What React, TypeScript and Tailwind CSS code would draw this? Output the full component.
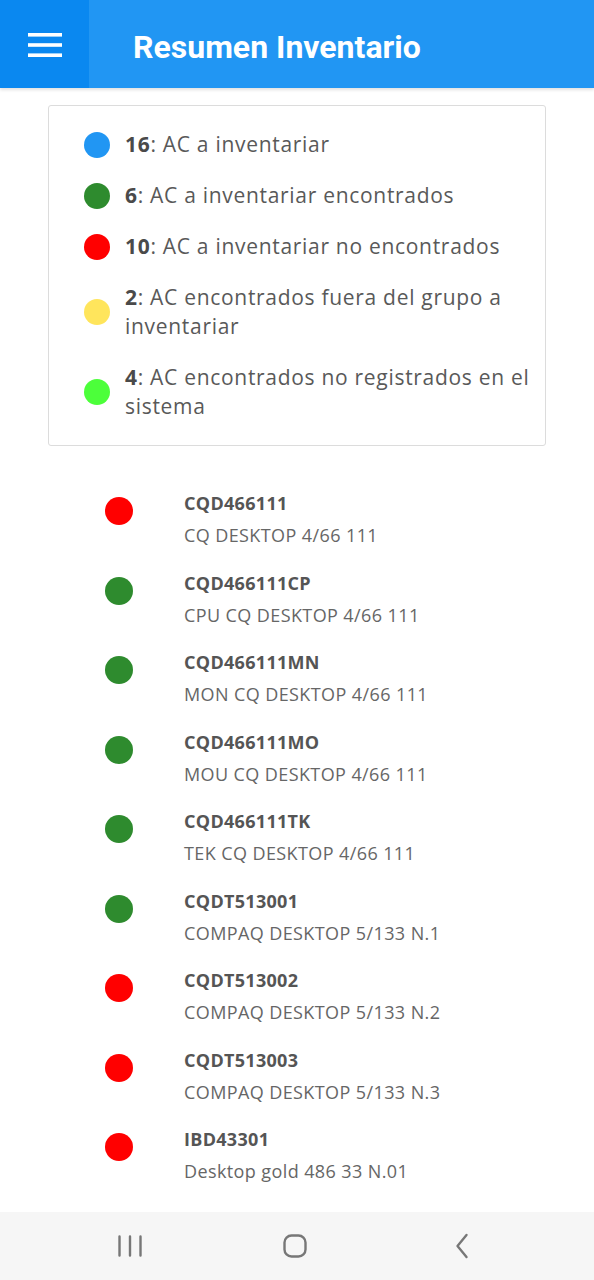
const legend = [
  { color: "bg-[#2196f3]", n: "16", text: "AC a inventariar" },
  { color: "bg-[#2e8b2e]", n: "6", text: "AC a inventariar encontrados" },
  { color: "bg-[#ff0000]", n: "10", text: "AC a inventariar no encontrados" },
  { color: "bg-[#ffe55c]", n: "2", text: "AC encontrados fuera del grupo a inventariar" },
  { color: "bg-[#4cff3a]", n: "4", text: "AC encontrados no registrados en el sistema" },
];

const items = [
  { color: "bg-[#ff0000]", code: "CQD466111", desc: "CQ DESKTOP 4/66 111" },
  { color: "bg-[#2e8b2e]", code: "CQD466111CP", desc: "CPU CQ DESKTOP 4/66 111" },
  { color: "bg-[#2e8b2e]", code: "CQD466111MN", desc: "MON CQ DESKTOP 4/66 111" },
  { color: "bg-[#2e8b2e]", code: "CQD466111MO", desc: "MOU CQ DESKTOP 4/66 111" },
  { color: "bg-[#2e8b2e]", code: "CQD466111TK", desc: "TEK CQ DESKTOP 4/66 111" },
  { color: "bg-[#2e8b2e]", code: "CQDT513001", desc: "COMPAQ DESKTOP 5/133 N.1" },
  { color: "bg-[#ff0000]", code: "CQDT513002", desc: "COMPAQ DESKTOP 5/133 N.2" },
  { color: "bg-[#ff0000]", code: "CQDT513003", desc: "COMPAQ DESKTOP 5/133 N.3" },
  { color: "bg-[#ff0000]", code: "IBD43301", desc: "Desktop gold 486 33 N.01" },
  { color: "bg-[#ff0000]", code: "IBD43302", desc: "Desktop gold 486 33 N.02" },
];

export default function App() {
  return (
    <div className="flex h-[1280px] w-[594px] flex-col overflow-hidden bg-white font-['Open_Sans',sans-serif]">
      {/* Header */}
      <div className="relative z-10 flex h-[88px] shrink-0 bg-[#2196f3] shadow-[0_2px_3px_rgba(0,0,0,0.12)]">
        <div className="flex w-[89px] items-center justify-center bg-[#0a88f0] pt-[2px] text-white">
          <svg width="34" height="24" viewBox="0 0 34 24" fill="currentColor">
            <rect x="0" y="0" width="34" height="3.6" />
            <rect x="0" y="10.2" width="34" height="3.6" />
            <rect x="0" y="20.4" width="34" height="3.6" />
          </svg>
        </div>
        <h1 className="ml-[44px] flex items-center pt-[6px] font-['Roboto',sans-serif] text-[32px] font-bold text-white">
          Resumen Inventario
        </h1>
      </div>

      {/* Content */}
      <div className="flex-1 overflow-hidden">
        <div className="mx-[48px] mt-[17px] rounded-[3px] border border-[#dcdcdc] py-[13px] pl-[35px] pr-[10px]">
          {legend.map((l) => (
            <div key={l.n} className="flex items-center gap-[15px] py-[11px]">
              <span className={`h-[26px] w-[26px] shrink-0 rounded-full ${l.color}`} />
              <p className="text-[21px] leading-[29px] tracking-[0.7px] text-[#595959]">
                <span className="font-bold text-[#4a4a4a]">{l.n}</span>: {l.text}
              </p>
            </div>
          ))}
        </div>

        <div className="mt-[45px]">
          {items.map((it) => (
            <div key={it.code} className="flex h-[79.5px] items-start">
              <span className={`ml-[105px] mt-[6px] h-[28px] w-[28px] shrink-0 rounded-full ${it.color}`} />
              <div className="ml-[51px]">
                <div className="text-[18px] font-bold leading-[24px] tracking-[0.3px] text-[#555]">{it.code}</div>
                <div className="mt-[8px] text-[18px] leading-[24px] tracking-[0.4px] text-[#666]">{it.desc}</div>
              </div>
            </div>
          ))}
        </div>
      </div>

      {/* Android nav bar */}
      <div className="flex h-[68px] shrink-0 items-center bg-[#f6f6f6] text-[#777]">
        <div className="ml-[100px] flex w-[60px] justify-center">
          <svg width="24" height="22" viewBox="0 0 24 22" fill="none" stroke="currentColor" strokeWidth="2.4" strokeLinecap="round">
            <path d="M1.5 1.5v19M12 1.5v19M22.5 1.5v19" />
          </svg>
        </div>
        <div className="ml-[105px] flex w-[60px] justify-center">
          <svg width="24" height="24" viewBox="0 0 24 24" fill="none" stroke="currentColor" strokeWidth="2.4">
            <rect x="1.5" y="1.5" width="21" height="21" rx="7" />
          </svg>
        </div>
        <div className="ml-[107px] flex w-[60px] justify-center">
          <svg width="14" height="26" viewBox="0 0 14 26" fill="none" stroke="currentColor" strokeWidth="2.4" strokeLinecap="round" strokeLinejoin="round">
            <path d="M11.5 2L2.5 13l9 11" />
          </svg>
        </div>
      </div>
    </div>
  );
}
